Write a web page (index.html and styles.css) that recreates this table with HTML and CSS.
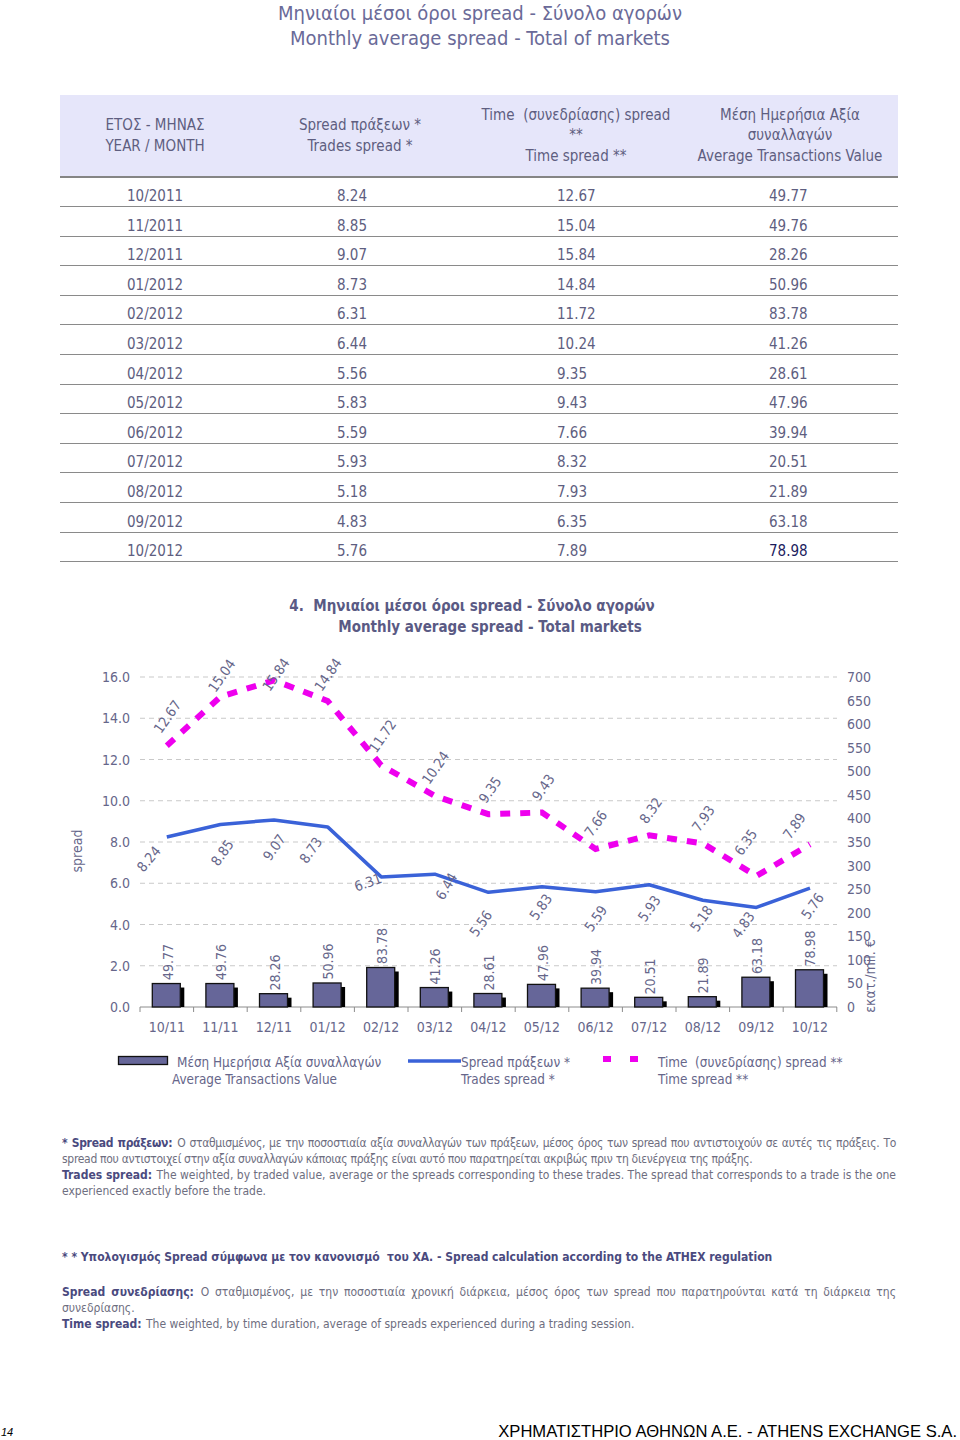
FILE: index.html
```html
<!DOCTYPE html>
<html lang="el">
<head>
<meta charset="utf-8">
<title>Monthly average spread - Total of markets</title>
<link rel="stylesheet" href="styles.css">
</head>
<body>
<div class="page">
  <header class="title">
    <div>Μηνιαίοι μέσοι όροι spread - Σύνολο αγορών</div>
    <div>Monthly average spread - Total of markets</div>
  </header>

  <table class="data">
    <colgroup>
      <col class="c1"><col class="c2"><col class="c3"><col class="c4">
    </colgroup>
    <thead>
      <tr>
        <th>ΕΤΟΣ - ΜΗΝΑΣ<br>YEAR / MONTH</th>
        <th>Spread πράξεων *<br>Trades spread *</th>
        <th>Time&nbsp; (συνεδρίασης) spread<br>**<br>Time spread **</th>
        <th>Μέση Ημερήσια Αξία<br>συναλλαγών<br>Average Transactions Value</th>
      </tr>
    </thead>
    <tbody>
      <tr><td>10/2011</td><td>8.24</td><td>12.67</td><td>49.77</td></tr>
      <tr><td>11/2011</td><td>8.85</td><td>15.04</td><td>49.76</td></tr>
      <tr><td>12/2011</td><td>9.07</td><td>15.84</td><td>28.26</td></tr>
      <tr><td>01/2012</td><td>8.73</td><td>14.84</td><td>50.96</td></tr>
      <tr><td>02/2012</td><td>6.31</td><td>11.72</td><td>83.78</td></tr>
      <tr><td>03/2012</td><td>6.44</td><td>10.24</td><td>41.26</td></tr>
      <tr><td>04/2012</td><td>5.56</td><td>9.35</td><td>28.61</td></tr>
      <tr><td>05/2012</td><td>5.83</td><td>9.43</td><td>47.96</td></tr>
      <tr><td>06/2012</td><td>5.59</td><td>7.66</td><td>39.94</td></tr>
      <tr><td>07/2012</td><td>5.93</td><td>8.32</td><td>20.51</td></tr>
      <tr><td>08/2012</td><td>5.18</td><td>7.93</td><td>21.89</td></tr>
      <tr><td>09/2012</td><td>4.83</td><td>6.35</td><td>63.18</td></tr>
      <tr><td>10/2012</td><td>5.76</td><td>7.89</td><td class="last">78.98</td></tr>
    </tbody>
  </table>

  <section class="chart">
    <h2 class="chart-title">
      <span class="l1">4.&nbsp; Μηνιαίοι μέσοι όροι spread - Σύνολο αγορών</span>
      <span class="l2">Monthly average spread - Total markets</span>
    </h2>
    <svg class="plot" width="960" height="460" viewBox="0 640 960 460" xmlns="http://www.w3.org/2000/svg">
      <g class="grid">
        <line x1="140" y1="676" x2="837" y2="676"/>
        <line x1="140" y1="717.25" x2="837" y2="717.25"/>
        <line x1="140" y1="758.5" x2="837" y2="758.5"/>
        <line x1="140" y1="799.75" x2="837" y2="799.75"/>
        <line x1="140" y1="841" x2="837" y2="841"/>
        <line x1="140" y1="882.25" x2="837" y2="882.25"/>
        <line x1="140" y1="923.5" x2="837" y2="923.5"/>
        <line x1="140" y1="964.75" x2="837" y2="964.75"/>
      </g>
      <g class="axis">
        <line x1="140" y1="1006" x2="837" y2="1006"/>
        <line x1="140" y1="1006" x2="140" y2="1011"/>
        <line x1="193.6" y1="1006" x2="193.6" y2="1011"/>
        <line x1="247.2" y1="1006" x2="247.2" y2="1011"/>
        <line x1="300.8" y1="1006" x2="300.8" y2="1011"/>
        <line x1="354.4" y1="1006" x2="354.4" y2="1011"/>
        <line x1="408" y1="1006" x2="408" y2="1011"/>
        <line x1="461.6" y1="1006" x2="461.6" y2="1011"/>
        <line x1="515.2" y1="1006" x2="515.2" y2="1011"/>
        <line x1="568.8" y1="1006" x2="568.8" y2="1011"/>
        <line x1="622.4" y1="1006" x2="622.4" y2="1011"/>
        <line x1="676" y1="1006" x2="676" y2="1011"/>
        <line x1="729.6" y1="1006" x2="729.6" y2="1011"/>
        <line x1="783.2" y1="1006" x2="783.2" y2="1011"/>
        <line x1="836.8" y1="1006" x2="836.8" y2="1011"/>
      </g>
      <g class="ylab-left">
        <text x="130" y="676">16.0</text>
        <text x="130" y="717.25">14.0</text>
        <text x="130" y="758.5">12.0</text>
        <text x="130" y="799.75">10.0</text>
        <text x="130" y="841">8.0</text>
        <text x="130" y="882.25">6.0</text>
        <text x="130" y="923.5">4.0</text>
        <text x="130" y="964.75">2.0</text>
        <text x="130" y="1006">0.0</text>
      </g>
      <g class="ylab-right">
        <text x="847" y="676">700</text>
        <text x="847" y="699.6">650</text>
        <text x="847" y="723.1">600</text>
        <text x="847" y="746.7">550</text>
        <text x="847" y="770.3">500</text>
        <text x="847" y="793.9">450</text>
        <text x="847" y="817.4">400</text>
        <text x="847" y="841">350</text>
        <text x="847" y="864.6">300</text>
        <text x="847" y="888.1">250</text>
        <text x="847" y="911.7">200</text>
        <text x="847" y="935.3">150</text>
        <text x="847" y="958.9">100</text>
        <text x="847" y="982.4">50</text>
        <text x="847" y="1006">0</text>
      </g>
      <text class="axis-title" transform="translate(77 850) rotate(-90)">spread</text>
      <text class="axis-title" transform="translate(870 975) rotate(-90)">εκατ./mil. €</text>

      <g class="shadows">
        <rect x="156.3" y="986.54" width="28" height="19.46"/>
        <rect x="209.9" y="986.54" width="28" height="19.46"/>
        <rect x="263.5" y="996.68" width="28" height="9.32"/>
        <rect x="317.1" y="985.98" width="28" height="20.02"/>
        <rect x="370.7" y="970.5" width="28" height="35.5"/>
        <rect x="424.3" y="990.55" width="28" height="15.45"/>
        <rect x="477.9" y="996.51" width="28" height="9.49"/>
        <rect x="531.5" y="987.39" width="28" height="18.61"/>
        <rect x="585.1" y="991.17" width="28" height="14.83"/>
        <rect x="638.7" y="1000.33" width="28" height="5.67"/>
        <rect x="692.3" y="999.68" width="28" height="6.32"/>
        <rect x="745.9" y="980.22" width="28" height="25.78"/>
        <rect x="799.5" y="972.77" width="28" height="33.23"/>
      </g>
      <g class="bars">
        <rect x="152.3" y="982.54" width="28" height="23.46"/>
        <rect x="205.9" y="982.54" width="28" height="23.46"/>
        <rect x="259.5" y="992.68" width="28" height="13.32"/>
        <rect x="313.1" y="981.98" width="28" height="24.02"/>
        <rect x="366.7" y="966.5" width="28" height="39.5"/>
        <rect x="420.3" y="986.55" width="28" height="19.45"/>
        <rect x="473.9" y="992.51" width="28" height="13.49"/>
        <rect x="527.5" y="983.39" width="28" height="22.61"/>
        <rect x="581.1" y="987.17" width="28" height="18.83"/>
        <rect x="634.7" y="996.33" width="28" height="9.67"/>
        <rect x="688.3" y="995.68" width="28" height="10.32"/>
        <rect x="741.9" y="976.22" width="28" height="29.78"/>
        <rect x="795.5" y="968.77" width="28" height="37.23"/>
      </g>

      <polyline class="time-line" points="166.8,744.7 220.4,695.8 274,679.3 327.6,699.9 381.2,764.3 434.8,794.8 488.4,813.2 542,811.5 595.6,848 649.2,834.4 702.8,842.4 756.4,875 810,843.3"/>
      <polyline class="trades-line" points="166.8,836 220.4,823.5 274,818.9 327.6,825.9 381.2,875.9 434.8,873.2 488.4,891.3 542,885.8 595.6,890.7 649.2,883.7 702.8,899.2 756.4,906.4 810,887.2"/>

      <g class="val">
        <text transform="translate(167.5 961) rotate(-90)">49.77</text>
        <text transform="translate(221 961) rotate(-90)">49.76</text>
        <text transform="translate(274.5 971.5) rotate(-90)">28.26</text>
        <text transform="translate(328 960.5) rotate(-90)">50.96</text>
        <text transform="translate(381.5 945) rotate(-90)">83.78</text>
        <text transform="translate(435 965.5) rotate(-90)">41.26</text>
        <text transform="translate(489 971.5) rotate(-90)">28.61</text>
        <text transform="translate(542.5 962) rotate(-90)">47.96</text>
        <text transform="translate(596 966) rotate(-90)">39.94</text>
        <text transform="translate(649.5 975.5) rotate(-90)">20.51</text>
        <text transform="translate(703 974.5) rotate(-90)">21.89</text>
        <text transform="translate(756.5 955) rotate(-90)">63.18</text>
        <text transform="translate(810 947.5) rotate(-90)">78.98</text>
      </g>
      <g class="val">
        <text transform="translate(167.3 715.7) rotate(-55)">12.67</text>
        <text transform="translate(221.7 674.7) rotate(-55)">15.04</text>
        <text transform="translate(276 673.5) rotate(-55)">15.84</text>
        <text transform="translate(328 673.5) rotate(-55)">14.84</text>
        <text transform="translate(382.5 735) rotate(-55)">11.72</text>
        <text transform="translate(435.5 766.7) rotate(-55)">10.24</text>
        <text transform="translate(490 788.8) rotate(-55)">9.35</text>
        <text transform="translate(543.3 786.3) rotate(-55)">9.43</text>
        <text transform="translate(595.8 822.5) rotate(-55)">7.66</text>
        <text transform="translate(650.8 809.5) rotate(-55)">8.32</text>
        <text transform="translate(703.3 817.5) rotate(-55)">7.93</text>
        <text transform="translate(745.8 841.2) rotate(-55)">6.35</text>
        <text transform="translate(794.2 825) rotate(-55)">7.89</text>
      </g>
      <g class="val">
        <text transform="translate(148.7 858) rotate(-50)">8.24</text>
        <text transform="translate(222.3 851.7) rotate(-55)">8.85</text>
        <text transform="translate(274.2 846.3) rotate(-55)">9.07</text>
        <text transform="translate(310.7 849.2) rotate(-55)">8.73</text>
        <text transform="translate(368 881.3) rotate(-20)">6.31</text>
        <text transform="translate(446.3 885.3) rotate(-60)">6.44</text>
        <text transform="translate(480.8 922.5) rotate(-55)">5.56</text>
        <text transform="translate(540.8 906) rotate(-55)">5.83</text>
        <text transform="translate(595.8 917.5) rotate(-55)">5.59</text>
        <text transform="translate(649.2 907.5) rotate(-55)">5.93</text>
        <text transform="translate(701.5 917.5) rotate(-55)">5.18</text>
        <text transform="translate(743.3 923.8) rotate(-55)">4.83</text>
        <text transform="translate(812.5 905) rotate(-55)">5.76</text>
      </g>

      <g class="xlab">
        <text x="166.8" y="1026">10/11</text>
        <text x="220.4" y="1026">11/11</text>
        <text x="274" y="1026">12/11</text>
        <text x="327.6" y="1026">01/12</text>
        <text x="381.2" y="1026">02/12</text>
        <text x="434.8" y="1026">03/12</text>
        <text x="488.4" y="1026">04/12</text>
        <text x="542" y="1026">05/12</text>
        <text x="595.6" y="1026">06/12</text>
        <text x="649.2" y="1026">07/12</text>
        <text x="702.8" y="1026">08/12</text>
        <text x="756.4" y="1026">09/12</text>
        <text x="810" y="1026">10/12</text>
      </g>

      <g class="legend">
        <rect class="lg-bar" x="118.5" y="1055.5" width="49" height="8"/>
        <text x="177" y="1061">Μέση Ημερήσια Αξία συναλλαγών</text>
        <text x="172" y="1078">Average Transactions Value</text>
        <line class="trades-line" x1="408" y1="1060" x2="461" y2="1060"/>
        <text x="461" y="1061">Spread πράξεων *</text>
        <text x="461" y="1078">Trades spread *</text>
        <rect class="lg-dash" x="603" y="1055" width="8" height="6"/>
        <rect class="lg-dash" x="630" y="1055" width="8" height="6"/>
        <text x="658" y="1061">Time&#160; (συνεδρίασης) spread **</text>
        <text x="658" y="1078">Time spread **</text>
      </g>
    </svg>
  </section>

  <section class="notes">
    <p class="gr"><b>* Spread πράξεων:</b> Ο σταθμισμένος, με την ποσοστιαία αξία συναλλαγών των πράξεων, μέσος όρος των spread που αντιστοιχούν σε αυτές τις πράξεις. Το spread που αντιστοιχεί στην αξία συναλλαγών κάποιας πράξης είναι αυτό που παρατηρείται ακριβώς πριν τη διενέργεια της πράξης.</p>
    <p><b>Trades spread:</b> The weighted, by traded value, average or the spreads corresponding to these trades. The spread that corresponds to a trade is the one experienced exactly before the trade.</p>
    <p class="calc"><b>* * Υπολογισμός Spread σύμφωνα με τον κανονισμό&nbsp; του ΧΑ. - Spread calculation according to the ATHEX regulation</b></p>
    <p><b>Spread συνεδρίασης:</b> Ο σταθμισμένος, με την ποσοστιαία χρονική διάρκεια, μέσος όρος των spread που παρατηρούνται κατά τη διάρκεια της συνεδρίασης.</p>
    <p><b>Time spread:</b> The weighted, by time duration, average of spreads experienced during a trading session.</p>
  </section>

  <footer class="footer">
    <span class="pg">14</span>
    <span class="org">ΧΡΗΜΑΤΙΣΤΗΡΙΟ ΑΘΗΝΩΝ Α.Ε. - ATHENS EXCHANGE S.A.</span>
  </footer>
</div>
</body>
</html>
```

FILE: styles.css
```css
html, body {
  margin: 0;
  padding: 0;
  background: #ffffff;
}

body {
  font-family: "DejaVu Sans Condensed", "DejaVu Sans", sans-serif;
  font-stretch: condensed;
  color: #5e5e80;
}

.page {
  width: 960px;
  height: 1440px;
  position: relative;
  overflow: hidden;
}

.title {
  text-align: center;
  font-size: 20px;
  line-height: 25px;
  color: #6a6a98;
  padding-top: 1px;
  margin: 0 0 44px 0;
}

.data {
  margin-left: 60px;
  width: 838px;
  border-collapse: collapse;
  table-layout: fixed;
  font-size: 15px;
  color: #5e5e80;
}

.data .c1 { width: 190px; }
.data .c2 { width: 220px; }
.data .c3 { width: 212px; }
.data .c4 { width: 216px; }

.data th {
  background: #e6e6fa;
  height: 81px;
  padding: 0;
  font-weight: normal;
  line-height: 20.5px;
  text-align: center;
  vertical-align: middle;
  border-bottom: 2px solid #858585;
}

.data td {
  height: 29.6px;
  padding: 0 0 0 87px;
  box-sizing: border-box;
  line-height: 17px;
  vertical-align: bottom;
  padding-bottom: 1px;
  border-bottom: 1.5px solid #8a8a8a;
}

.data td:first-child { padding-left: 67px; }
.data td.last { color: #1c1c5e; }

.chart {
  margin-top: 34px;
}

.chart-title {
  margin: 0;
  font-size: 15px;
  line-height: 21px;
  font-weight: bold;
  color: #5a5a84;
  display: flex;
  flex-direction: column;
  align-items: center;
}

.chart-title .l1 { margin-right: 16px; }
.chart-title .l2 { margin-left: 20px; }

.plot {
  display: block;
  margin-top: 3px;
  font-family: "DejaVu Sans Condensed", "DejaVu Sans", sans-serif;
}

.plot text {
  font-size: 14px;
  fill: #66668a;
  dominant-baseline: central;
}

.plot .legend text {
  font-size: 13.4px;
}

.grid line {
  stroke: #c9c9c9;
  stroke-width: 1;
  stroke-dasharray: 5 4;
}

.axis line {
  stroke: #8c8c8c;
  stroke-width: 1;
}

.ylab-left text { text-anchor: end; }
.ylab-right text { text-anchor: start; }
.axis-title { text-anchor: middle; }
.xlab text { text-anchor: middle; }
.val text { text-anchor: middle; }

.bars rect, .lg-bar {
  fill: #666699;
  stroke: #111111;
  stroke-width: 1.3;
}

.shadows rect { fill: #000000; }

.time-line {
  fill: none;
  stroke: #ee00ee;
  stroke-width: 6;
  stroke-dasharray: 10 10;
}

.trades-line {
  fill: none;
  stroke: #3a62d8;
  stroke-width: 3.5;
  stroke-linejoin: round;
}

.lg-dash { fill: #ee00ee; }

.notes {
  margin: 34px 64px 0 62px;
  font-size: 12px;
  line-height: 16px;
  color: #6e6e80;
  text-align: justify;
}

.notes p { margin: 0; }
.notes p.gr { letter-spacing: -0.3px; }
.notes b { color: #4a4a7e; margin-right: 1px; }
.notes .calc b { margin-right: 0; }
.notes .calc { margin-top: 50px; margin-bottom: 19px; }

.footer {
  position: absolute;
  left: 0;
  right: 0;
  bottom: 0;
  height: 16px;
  display: flex;
  justify-content: space-between;
  align-items: center;
  line-height: 16px;
  font-family: "Liberation Sans", Arial, sans-serif;
  color: #000000;
}

.footer .pg {
  font-size: 11px;
  font-style: italic;
  padding-left: 1px;
}

.footer .org {
  font-size: 16.6px;
  padding-right: 3px;
}
```
